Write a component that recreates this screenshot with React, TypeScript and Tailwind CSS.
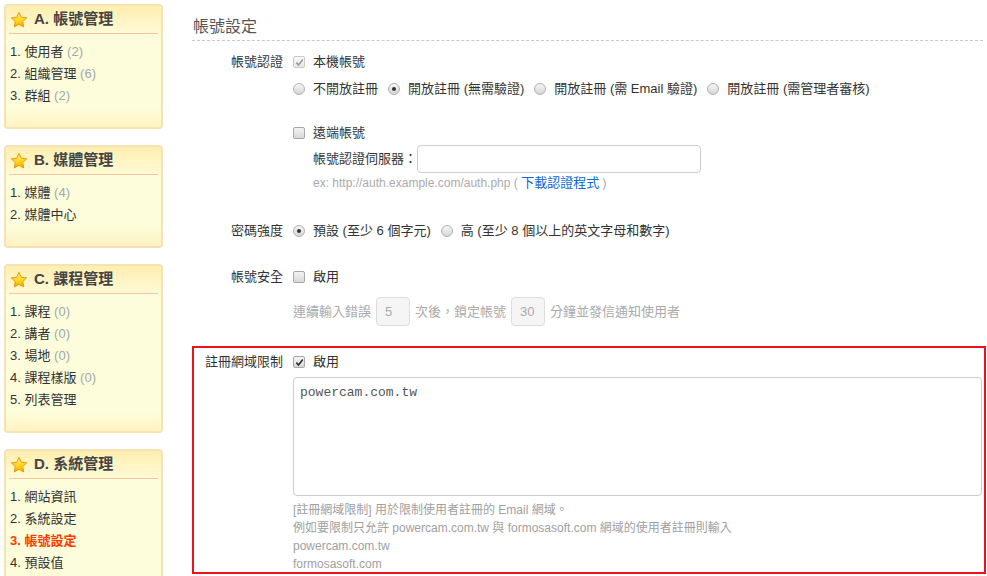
import React from "react";

const font = { fontFamily: '"Liberation Sans", "Noto Sans CJK TC", sans-serif' };

type MenuItem = { label: string; count?: number; active?: boolean };
type Menu = { title: string; items: MenuItem[] };

const menus: Menu[] = [
  {
    title: "A. 帳號管理",
    items: [
      { label: "使用者", count: 2 },
      { label: "組織管理", count: 6 },
      { label: "群組", count: 2 },
    ],
  },
  {
    title: "B. 媒體管理",
    items: [{ label: "媒體", count: 4 }, { label: "媒體中心" }],
  },
  {
    title: "C. 課程管理",
    items: [
      { label: "課程", count: 0 },
      { label: "講者", count: 0 },
      { label: "場地", count: 0 },
      { label: "課程樣版", count: 0 },
      { label: "列表管理" },
    ],
  },
  {
    title: "D. 系統管理",
    items: [
      { label: "網站資訊" },
      { label: "系統設定" },
      { label: "帳號設定", active: true },
      { label: "預設值" },
    ],
  },
];

const Star = () => (
  <svg width="18" height="18" viewBox="0 0 24 24" className="shrink-0">
    <defs>
      <linearGradient id="starfill" x1="0" y1="0" x2="0" y2="1">
        <stop offset="0" stopColor="#fff27a" />
        <stop offset="0.6" stopColor="#ffd21c" />
        <stop offset="1" stopColor="#f7a800" />
      </linearGradient>
    </defs>
    <path
      d="M12 1.8l3.1 6.5 7.1.9-5.2 4.9 1.3 7.1L12 17.8l-6.3 3.4 1.3-7.1L1.8 9.2l7.1-.9z"
      fill="url(#starfill)"
      stroke="#e59a00"
      strokeWidth="1.3"
      strokeLinejoin="round"
    />
  </svg>
);

const SidePanel = ({ menu }: { menu: Menu }) => (
  <div className="shrink-0 rounded-[4px] border-2 border-[#f6e3b4] bg-[#fdfddb] overflow-hidden">
    <div className="h-[27px] flex items-center pl-[4px] bg-gradient-to-b from-[#ffeeb0] to-[#fffad6]">
      <Star />
      <span className="ml-[6px] text-[15px] font-bold text-[#444]">{menu.title}</span>
    </div>
    <div className="mx-[3px] h-px bg-[#f6c79f]" />
    <div className="pt-[7px] pl-[4px]">
      {menu.items.map((item, i) => (
        <div
          key={i}
          className={
            item.active
              ? "h-[22px] leading-[22px] text-[13px] text-[#ff3a00] font-bold"
              : "h-[22px] leading-[22px] text-[13px] text-[#333]"
          }
        >
          {i + 1}. {item.label}
          {item.count !== undefined && (
            <span className="text-[#a0a8b0]"> ({item.count})</span>
          )}
        </div>
      ))}
    </div>
    <div className="h-[20px] bg-gradient-to-b from-[#fdfddb] to-[#fff3c2]" />
  </div>
);

const Checkbox = ({ checked, disabled }: { checked?: boolean; disabled?: boolean }) => (
  <span
    className={
      disabled
        ? "w-[12px] h-[12px] rounded-[2px] border border-[#c8c8c8] bg-gradient-to-b from-[#fafafa] to-[#e6e6e6] flex items-center justify-center shrink-0"
        : "w-[12px] h-[12px] rounded-[2px] border border-[#a8a8a8] bg-gradient-to-b from-[#f4f4f4] to-[#d8d8d8] flex items-center justify-center shrink-0"
    }
  >
    {checked && (
      <svg width="9" height="9" viewBox="0 0 10 10">
        <path
          d="M1.5 5.2l2.4 2.5L8.6 1.8"
          fill="none"
          stroke={disabled ? "#9a9a9a" : "#333"}
          strokeWidth="1.8"
        />
      </svg>
    )}
  </span>
);

const Radio = ({ checked }: { checked?: boolean }) => (
  <span className="w-[12px] h-[12px] rounded-full border border-[#b0b0b0] bg-gradient-to-b from-[#f6f6f6] to-[#d6d6d6] flex items-center justify-center shrink-0">
    {checked && <span className="w-[4px] h-[4px] rounded-full bg-[#333]" />}
  </span>
);

const Option = ({ checked, children }: { checked?: boolean; children: React.ReactNode }) => (
  <span className="flex items-center">
    <Radio checked={checked} />
    <span className="ml-[8px]">{children}</span>
  </span>
);

const Row = ({
  label,
  className,
  labelW = "w-[91px]",
  children,
}: {
  label?: string;
  className?: string;
  labelW?: string;
  children: React.ReactNode;
}) => (
  <div className={"flex " + (className || "")}>
    <div className={labelW + " shrink-0 text-right text-[13px] leading-[22px] text-[#333]"}>
      {label}
    </div>
    <div className="ml-[10px] flex-1 min-w-0">{children}</div>
  </div>
);

export default function App() {
  return (
    <div className="w-[987px] h-[576px] overflow-hidden bg-white flex" style={font}>
      {/* sidebar */}
      <div className="w-[163px] shrink-0 pl-[4px] pt-[4px] flex flex-col gap-[16px]">
        {menus.map((m, i) => (
          <SidePanel key={i} menu={m} />
        ))}
      </div>

      {/* main */}
      <div className="flex-1 pl-[29px] pr-[1px]">
        <div className="pt-[16px] pb-[2px] border-b border-dashed border-[#c8c8c8] mr-[3px]">
          <div className="text-[16px] leading-[22px] text-[#555] pl-[1px]">帳號設定</div>
        </div>

        <Row label="帳號認證" className="mt-[10px]">
          <div className="flex items-center h-[22px] text-[13px] text-[#333]">
            <Checkbox checked disabled />
            <span className="ml-[8px]">本機帳號</span>
          </div>
          <div className="flex items-center gap-[10px] h-[22px] mt-[5px] text-[13px] text-[#333]">
            <Option>不開放註冊</Option>
            <Option checked>開放註冊 (無需驗證)</Option>
            <Option>開放註冊 (需 Email 驗證)</Option>
            <Option>開放註冊 (需管理者審核)</Option>
          </div>

          <div className="flex items-center h-[22px] mt-[22px] text-[13px] text-[#333]">
            <Checkbox />
            <span className="ml-[8px]">遠端帳號</span>
          </div>
          <div className="flex items-center h-[28px] mt-[1px] pl-[20px] text-[13px] text-[#333]">
            <span>帳號認證伺服器：</span>
            <div className="w-[284px] h-[28px] border border-[#ccc] rounded-[4px] bg-white" />
          </div>
          <div className="pl-[20px] h-[20px] leading-[20px] text-[12px] text-[#aaa]">
            ex: http://auth.example.com/auth.php ({" "}
            <span className="text-[#0a66d8] text-[13px]">下載認證程式</span> )
          </div>
        </Row>

        <Row label="密碼強度" className="mt-[27px]">
          <div className="flex items-center gap-[10px] h-[22px] text-[13px] text-[#333]">
            <Option checked>預設 (至少 6 個字元)</Option>
            <Option>高 (至少 8 個以上的英文字母和數字)</Option>
          </div>
        </Row>

        <Row label="帳號安全" className="mt-[24px]">
          <div className="flex items-center h-[22px] text-[13px] text-[#333]">
            <Checkbox />
            <span className="ml-[8px]">啟用</span>
          </div>
          <div className="flex items-center h-[29px] mt-[9px] text-[13px] text-[#aaa] gap-[5px]">
            <span>連續輸入錯誤</span>
            <div className="w-[34px] h-[29px] border border-[#ddd] rounded-[4px] bg-[#f5f5f5] pl-[8px] leading-[27px] text-[13px] text-[#aaa]">
              5
            </div>
            <span>次後，鎖定帳號</span>
            <div className="w-[34px] h-[29px] border border-[#ddd] rounded-[4px] bg-[#f5f5f5] pl-[8px] leading-[27px] text-[13px] text-[#aaa]">
              30
            </div>
            <span>分鐘並發信通知使用者</span>
          </div>
        </Row>

        <div className="mt-[20px] border-2 border-[#e8131c] pt-[3px] pr-[2px] h-[228px]">
          <Row label="註冊網域限制" labelW="w-[89px]">
            <div className="flex items-center h-[22px] text-[13px] text-[#333]">
              <Checkbox checked />
              <span className="ml-[8px]">啟用</span>
            </div>
            <div
              className="mt-[4px] h-[119px] border border-[#ccc] rounded-[4px] bg-white px-[6px] py-[5px] text-[13px] text-[#555]"
              style={{ fontFamily: '"Liberation Mono", monospace' }}
            >
              powercam.com.tw
            </div>
            <div className="mt-[5px] text-[12px] leading-[18px] text-[#a0a0a0]">
              <div>[註冊網域限制] 用於限制使用者註冊的 Email 網域。</div>
              <div>例如要限制只允許 powercam.com.tw 與 formosasoft.com 網域的使用者註冊則輸入</div>
              <div>powercam.com.tw</div>
              <div>formosasoft.com</div>
            </div>
          </Row>
        </div>
      </div>
    </div>
  );
}
